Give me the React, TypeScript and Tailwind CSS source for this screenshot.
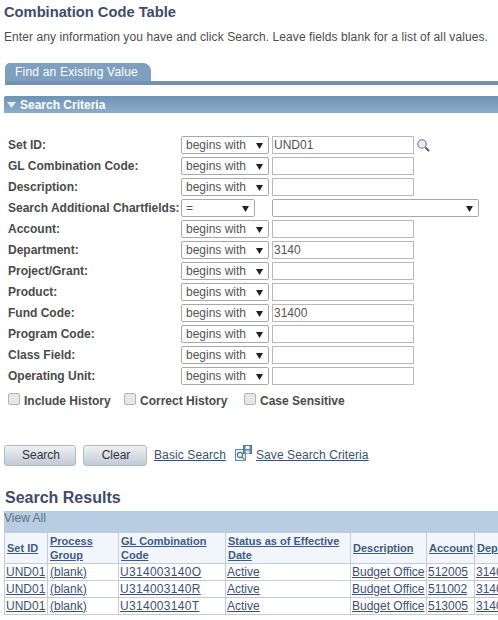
const FIELDS = [
  { label: 'Set ID:', value: 'UND01', lookup: true },
  { label: 'GL Combination Code:', value: '' },
  { label: 'Description:', value: '' },
  { label: 'Search Additional Chartfields:', value: '', chart: true },
  { label: 'Account:', value: '' },
  { label: 'Department:', value: '3140' },
  { label: 'Project/Grant:', value: '' },
  { label: 'Product:', value: '' },
  { label: 'Fund Code:', value: '31400' },
  { label: 'Program Code:', value: '' },
  { label: 'Class Field:', value: '' },
  { label: 'Operating Unit:', value: '' },
];

const RESULTS = [
  { code: 'U314003140O', account: '512005' },
  { code: 'U314003140R', account: '511002' },
  { code: 'U314003140T', account: '513005' },
];

function Arrow() {
  return (
    <svg width="7" height="7" viewBox="0 0 7 7" className="shrink-0">
      <path d="M0 1h7L3.5 7z" fill="#222" />
    </svg>
  );
}

function FakeSelect({ text, className }: { text: string; className: string }) {
  return (
    <div className={`flex h-[18px] items-center justify-between rounded-[2px] border border-[#a9a9a9] pl-[4px] pr-[5px] text-[12px] text-[#555] ${className}`}>
      <span>{text}</span>
      <Arrow />
    </div>
  );
}

function Lookup() {
  return (
    <svg width="15" height="15" viewBox="0 0 15 15" className="ml-[2px] mt-[2px]">
      <circle cx="6" cy="6" r="4.2" fill="#e3eef5" stroke="#66778a" strokeWidth="1.1" />
      <path d="M9.5 9.5l3.6 3.6" stroke="#5a5040" strokeWidth="2" />
    </svg>
  );
}

function SaveIcon() {
  return (
    <svg width="17" height="17" viewBox="0 0 17 17" className="ml-[9px] mr-[4px] -mt-[3px] shrink-0">
      <rect x="0.5" y="4.5" width="10" height="11" fill="#eef3f8" stroke="#5f86ad" />
      <circle cx="5" cy="10" r="2.6" fill="none" stroke="#4f7398" strokeWidth="1.2" />
      <path d="M7 12l2.5 2.5" stroke="#7fa03a" strokeWidth="1.6" />
      <rect x="8.5" y="0.5" width="8" height="8" fill="#5f86ad" stroke="#4f7398" />
      <rect x="10.5" y="1" width="4" height="3" fill="#fff" />
      <rect x="10.5" y="5.5" width="4" height="3" fill="#dfe8f0" />
    </svg>
  );
}

function Check({ label, className }: { label: string; className: string }) {
  return (
    <div className={`flex items-center ${className}`}>
      <span className="mb-[4px] mr-[4px] h-[12px] w-[12px] rounded-[2px] border border-[#b5b5b5] bg-[#e6e6e6]" />
      <span className="text-[12px] font-bold text-[#4a4a4a]">{label}</span>
    </div>
  );
}

const linkCls = 'text-[#3d4f75] underline tracking-[0.1px]';
const thCls = 'border border-[#c5ccd6] bg-[#f0f6fc] pl-[2px] text-left align-middle text-[11px] font-bold leading-[14px] text-[#3f5a85] underline';
const tdCls = 'border border-[#c5ccd6] text-[12px] leading-[15px] text-[#3d4f75] underline whitespace-nowrap overflow-hidden';

export default function App() {
  return (
    <div className="h-[620px] w-[498px] overflow-hidden bg-white font-['Liberation_Sans',Arial,sans-serif]">
      <h1 className="pl-[4px] pt-[4px] text-[14.7px] font-bold leading-[16px] text-[#3e4b6b]">Combination Code Table</h1>
      <p className="mt-[10px] pl-[4px] text-[12px] leading-[15px] tracking-[0.09px] text-[#4c4c4c]">
        Enter any information you have and click Search. Leave fields blank for a list of all values.
      </p>

      {/* Tab */}
      <div className="ml-[5px] mt-[18px]">
        <div className="flex h-[18px] w-[146px] items-center rounded-tl-[5px] rounded-tr-[8px] bg-[#7f9fc0] pl-[10px] text-[12px] tracking-[0.2px] text-white">
          Find an Existing Value
        </div>
        <div className="h-[4px] bg-[#7391b2]" />
      </div>

      {/* Search criteria header */}
      <div className="ml-[4px] mt-[11px] flex h-[17px] items-center rounded-tl-[2px] bg-gradient-to-b from-[#6f93b5] to-[#8aadc9] pl-[3px] text-[12px] font-bold text-white">
        <svg width="9" height="6" viewBox="0 0 9 6" className="mr-[4px]">
          <path d="M0 0h9L4.5 6z" fill="#e6f0f8" />
        </svg>
        Search Criteria
      </div>

      {/* Fields */}
      <div className="mt-[23px] pl-[8px]">
        {FIELDS.map((f) => (
          <div key={f.label} className="flex h-[21px]">
            <div className="w-[173px] whitespace-nowrap pt-[1px] text-[12px] font-bold leading-[16px] text-[#4a4a4a]">{f.label}</div>
            {f.chart ? (
              <>
                <FakeSelect text="=" className="w-[74px]" />
                <FakeSelect text="" className="ml-[17px] w-[207px]" />
              </>
            ) : (
              <>
                <FakeSelect text="begins with" className="w-[88px]" />
                <div className="ml-[3px] flex h-[18px] w-[142px] items-center border border-[#b9b9b9] pl-[1px] text-[12px] text-[#555]">{f.value}</div>
                {f.lookup && <Lookup />}
              </>
            )}
          </div>
        ))}
      </div>

      <div className="mt-[3px] flex h-[20px] items-center pl-[8px]">
        <Check label="Include History" className="w-[116px]" />
        <Check label="Correct History" className="w-[120px]" />
        <Check label="Case Sensitive" className="" />
      </div>

      {/* Buttons */}
      <div className="ml-[4px] mt-[33px] flex h-[22px] items-center text-[12px]">
        <div className="flex h-[21px] w-[72px] items-center justify-center rounded-[3px] border border-[#b4bac4] bg-gradient-to-b from-[#eef1f6] to-[#c3cad6] pl-[2px] text-[#333]">Search</div>
        <div className="ml-[7px] flex h-[21px] w-[64px] items-center justify-center rounded-[3px] border border-[#b4bac4] bg-gradient-to-b from-[#eef1f6] to-[#c3cad6] pl-[2px] text-[#333]">Clear</div>
        <span className={`ml-[7px] ${linkCls}`}>Basic Search</span>
        <SaveIcon />
        <span className={linkCls}>Save Search Criteria</span>
      </div>

      {/* Results */}
      <h2 className="ml-[5px] mt-[23px] text-[16px] font-bold leading-[18px] text-[#3e4b6b]">Search Results</h2>
      <div className="ml-[4px] mt-[4px] h-[21px] bg-[#b8cde3] text-[12px] leading-[15px] text-[#5f6f80]">View All</div>
      <table className="ml-[4px] w-[520px] table-fixed border-collapse">
        <colgroup>
          <col className="w-[43px]" />
          <col className="w-[71px]" />
          <col className="w-[107px]" />
          <col className="w-[125px]" />
          <col className="w-[76px]" />
          <col className="w-[48px]" />
          <col className="w-[50px]" />
        </colgroup>
        <thead>
          <tr className="h-[31px]">
            <th className={thCls}>Set ID</th>
            <th className={thCls}>Process Group</th>
            <th className={thCls}>GL Combination Code</th>
            <th className={thCls}>Status as of Effective Date</th>
            <th className={thCls}>Description</th>
            <th className={thCls}>Account</th>
            <th className={thCls}>Department</th>
          </tr>
        </thead>
        <tbody>
          {RESULTS.map((r) => (
            <tr key={r.code} className="h-[17px]">
              <td className={`${tdCls} pl-[1px]`}>UND01</td>
              <td className={`${tdCls} pl-[2px]`}>(blank)</td>
              <td className={`${tdCls} pl-[1px] tracking-[0.3px]`}>{r.code}</td>
              <td className={`${tdCls} pl-[1px]`}>Active</td>
              <td className={`${tdCls} pl-[1px]`}>Budget Office</td>
              <td className={`${tdCls} pl-[1px]`}>{r.account}</td>
              <td className={`${tdCls} pl-[1px]`}>3140</td>
            </tr>
          ))}
        </tbody>
      </table>
    </div>
  );
}
